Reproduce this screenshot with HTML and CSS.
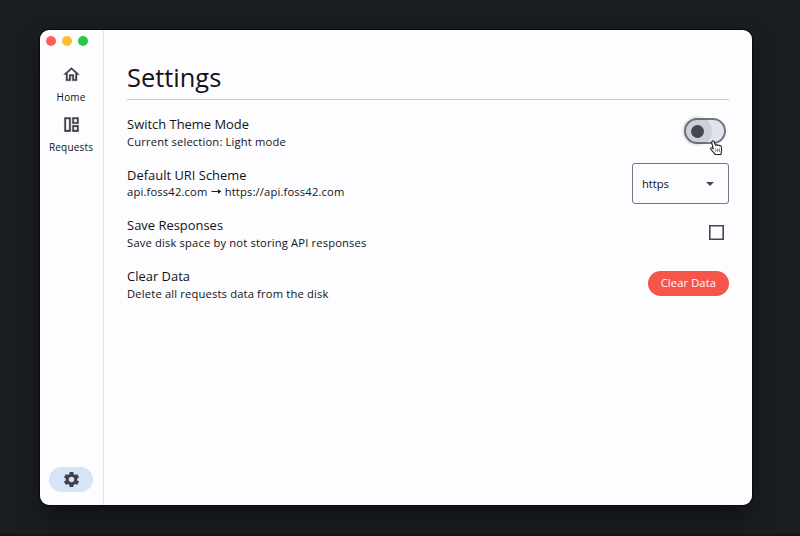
FILE: index.html
```html
<!DOCTYPE html>
<html lang="en">
<head>
<meta charset="utf-8">
<title>Settings</title>
<link rel="stylesheet" href="styles.css">
</head>
<body>
<div class="window">
  <nav class="rail">
    <div class="lights"><i class="red"></i><i class="yellow"></i><i class="green"></i></div>
    <a class="item">
      <svg viewBox="0 0 24 24"><path d="M12 5.69l5 4.5V18h-2v-6H9v6H7v-7.81l5-4.5M12 3L2 12h3v8h6v-6h2v6h6v-8h3L12 3z"/></svg>
      <span>Home</span>
    </a>
    <a class="item">
      <svg viewBox="0 0 24 24"><path fill-rule="evenodd" d="M3 21h8V3H3v18zM5 5h4v14H5V5zM13 3v8h8V3h-8zm6 6h-4V5h4v4zM13 21h8v-8h-8v8zm2-6h4v4h-4v-4z"/></svg>
      <span>Requests</span>
    </a>
    <a class="gear">
      <svg viewBox="0 0 24 24"><path d="M19.14 12.94c.04-.3.06-.61.06-.94 0-.32-.02-.64-.07-.94l2.03-1.58c.18-.14.23-.41.12-.61l-1.92-3.32c-.12-.22-.37-.29-.59-.22l-2.39.96c-.5-.38-1.03-.7-1.62-.94l-.36-2.54c-.04-.24-.24-.41-.48-.41h-3.84c-.24 0-.43.17-.47.41l-.36 2.54c-.59.24-1.13.57-1.62.94l-2.39-.96c-.22-.08-.47 0-.59.22L2.74 8.87c-.12.21-.08.47.12.61l2.03 1.58c-.05.3-.09.63-.09.94s.02.64.07.94l-2.03 1.58c-.18.14-.23.41-.12.61l1.92 3.32c.12.22.37.29.59.22l2.39-.96c.5.38 1.03.7 1.62.94l.36 2.54c.05.24.24.41.48.41h3.84c.24 0 .44-.17.47-.41l.36-2.54c.59-.24 1.13-.56 1.62-.94l2.39.96c.22.08.47 0 .59-.22l1.92-3.32c.12-.22.07-.47-.12-.61l-2.01-1.58zM12 15.6c-1.98 0-3.6-1.62-3.6-3.6s1.62-3.6 3.6-3.6 3.6 1.62 3.6 3.6-1.62 3.6-3.6 3.6z"/></svg>
    </a>
  </nav>
  <main>
    <h1>Settings</h1>
    <section class="row">
      <div><h2>Switch Theme Mode</h2><p>Current selection: Light mode</p></div>
      <div class="switch"><span class="halo"></span><span class="knob"></span>
        <svg class="cursor" viewBox="0 0 14 16"><path d="M3.2 1.2C4 .6 5 1 5.300 2L6.400 5.200C7 4.600 8 4.800 8.400 5.400C9 4.800 10 5 10.400 5.700C11.300 5.200 12.200 5.800 12.300 6.800C12.600 8.500 13 9.800 12.300 11.400L12 14.500H6.200C5.500 12.800 3.500 11.400 2 9.500C1.300 8.600 1.800 7.600 2.900 7.800L4.200 8.600L2.800 3C2.600 2.200 2.700 1.500 3.200 1.200Z" fill="#fff" stroke="#202124" stroke-width="1.1"/><path d="M6.800 8.500v3.300M8.600 8.500v3.300M10.400 8.500v3.300" stroke="#55575a" stroke-width=".8"/></svg>
      </div>
    </section>
    <section class="row">
      <div><h2>Default URI Scheme</h2><p>api.foss42.com <svg class="arrow" viewBox="0 0 11 8"><path d="M.5 3.500H9" fill="none" stroke="#1a1c1e" stroke-width="1"/><path d="M7 1.300L10.300 3.500L7 5.700Z" fill="#1a1c1e"/></svg> https://api.foss42.com</p></div>
      <div class="select"><span>https</span><i></i></div>
    </section>
    <section class="row">
      <div><h2>Save Responses</h2><p>Save disk space by not storing API responses</p></div>
      <div class="check"></div>
    </section>
    <section class="row">
      <div><h2>Clear Data</h2><p>Delete all requests data from the disk</p></div>
      <div class="button">Clear Data</div>
    </section>
  </main>
</div>
</body>
</html>
```
FILE: styles.css
```css
* { box-sizing: border-box; }
body {
  margin: 0; height: 536px; padding: 30px 0 0 39.600px; overflow: hidden;
  background: #1a1e21; color: #111315; font-family: "Open Sans", sans-serif;
  border-bottom: 2px solid #1d1018;
}
h1, h2, p { margin: 0; font-weight: 400; white-space: nowrap; }
.window {
  display: flex; width: 712.800px; height: 475px; background: #fdfcff;
  border-radius: 9px; box-shadow: 0 0 1px 1px #090b0c, 0 12px 28px rgba(0,0,0,.4);
}
.rail {
  width: 64px; border-right: 1px solid #e1e2e6; display: flex;
  flex-direction: column; align-items: center; padding-bottom: 13px;
}
.lights { align-self: flex-start; display: flex; gap: 6px; padding: 6px 0 0 6px; height: 34.500px; }
.lights i { width: 10px; height: 10px; border-radius: 50%; }
.red { background: #ff5f57; }
.yellow { background: #febc2e; }
.green { background: #28c840; }
.item { height: 50.700px; display: flex; flex-direction: column; align-items: center; font-size: 10px; line-height: 14px; letter-spacing: .2px; }
.item svg { width: 19px; height: 19px; fill: #3b3f45; stroke: #3b3f45; stroke-width: .4; margin-bottom: 6px; flex: none; }
.gear { margin-top: auto; width: 44px; height: 25px; border-radius: 13px; background: #d7e3f8; display: flex; align-items: center; justify-content: center; }
.gear svg { width: 19px; height: 19px; fill: #3e4248; }
main { flex: 1; padding: 29px 23.500px 0 23.500px; }
h1 { height: 41px; line-height: 36px; font-size: 25.400px; border-bottom: 1px solid #c5c6ca; margin-bottom: 7px; }
.row { height: 50.600px; display: flex; align-items: center; justify-content: space-between; }
h2 { font-size: 12.900px; line-height: 18px; letter-spacing: .02px; }
p { font-size: 11.200px; line-height: 16px; letter-spacing: .16px; position: relative; top: .6px; }
.arrow { width: 11px; height: 8px; }
.switch { position: relative; width: 41.500px; height: 26px; margin: -2px 3px 0 0; border: 2px solid #74777f; border-radius: 13px; background: #e0e2ec; }
.halo { position: absolute; left: -4.500px; top: -4px; width: 30px; height: 30px; border-radius: 50%; background: rgba(26,28,30,.09); }
.knob { position: absolute; left: 4.500px; top: 4.500px; width: 13px; height: 13px; border-radius: 50%; background: #43474e; }
.cursor { position: absolute; left: 22.500px; top: 19.500px; width: 14px; height: 16px; }
.select { width: 97px; height: 41px; margin-top: 2px; border: 1px solid #74777f; border-radius: 3px; display: flex; justify-content: space-between; align-items: center; padding: 0 14px 0 9px; font-size: 11.200px; }
.select i { border: 4.500px solid transparent; border-top-color: #43474e; border-bottom: 0; }
.check { width: 15px; height: 15px; box-shadow: inset 0 0 0 1.600px #43474e; margin: -1px 5px 0 0; }
.button { width: 81px; height: 25.500px; margin-top: -1px; line-height: 24px; border-radius: 13px; text-align: center; color: #fff; background: #f5554a; font-size: 11.200px; letter-spacing: .1px; }
```
